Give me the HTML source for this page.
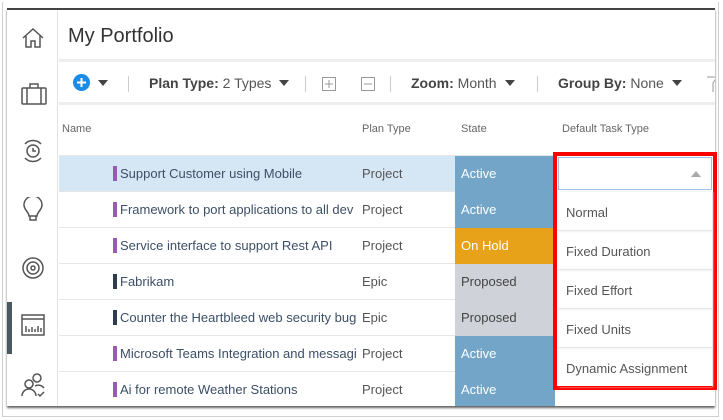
<!DOCTYPE html>
<html><head><meta charset="utf-8"><style>
*{margin:0;padding:0;box-sizing:border-box}
body{width:723px;height:420px;background:#fff;font-family:"Liberation Sans",sans-serif;position:relative;overflow:hidden}
.frame{position:absolute;left:2px;top:2px;width:717px;height:415px;border:1px solid #d0d0d0;border-top:none}
.app{position:absolute;left:7px;top:8px;width:708px;height:398px;background:#fff;border-top:2px solid #444;box-shadow:0 2px 2px #666;overflow:hidden}
.side{position:absolute;left:0;top:0;width:51px;height:100%;border-right:1px solid #e2e2e2}
.side svg{position:absolute;left:14px}
.act{position:absolute;left:0;top:292px;width:5px;height:52px;background:#4a5862}
.title{position:absolute;left:61px;top:15px;font-size:20px;color:#333}
.band{position:absolute;left:52px;right:0;height:3px;background:#eee}
.tb{position:absolute;left:52px;top:54px;right:0;height:38px;font-size:14px;color:#555}
.tb span{position:absolute;top:11px;white-space:nowrap}
.tb b{color:#444}
.tri{display:inline-block;width:0;height:0;border-left:5px solid transparent;border-right:5px solid transparent;border-top:6px solid #444;margin-left:8px;vertical-align:2px}
.vs{position:absolute;top:12px;width:1px;height:16px;background:#ccc}
.hdr{position:absolute;top:113px;font-size:11px;color:#666}
.row{position:absolute;left:52px;right:0;height:36px;border-bottom:1px solid #e6e6e6;font-size:13px;color:#3c4f66}
.row .n{position:absolute;left:54px;top:10px;white-space:nowrap;width:247px;overflow:hidden;padding-left:7px}
.row .n:before{content:"";position:absolute;left:0;top:-1px;width:4px;height:18px;background:var(--c)}
.row .p{position:absolute;left:303px;top:10px;color:#555}
.row .s{position:absolute;left:396px;top:0;width:100px;height:36px;padding:10px 6px;color:#fff}
.red{position:absolute;left:553px;top:152px;width:164px;height:238px;border:4px solid #f00;background:#fff}
.inp{position:absolute;left:1px;top:1px;width:154px;height:33px;border:1px solid #9cc3e6}
.inp:after{content:"";position:absolute;right:10px;top:13px;border-left:5px solid transparent;border-right:5px solid transparent;border-bottom:6px solid #aaa}
.opt{position:absolute;left:1px;width:154px;height:39px;border-bottom:1px solid #eee;font-size:13px;color:#555;padding:13px 8px;box-shadow:1px 0 2px #ddd}
</style></head><body>
<div class="frame"></div>
<div class="app">
 <div class="side">
  <svg style="top:16px" width="24" height="24" viewBox="0 0 24 24" fill="none" stroke="#555" stroke-width="1.5"><path d="M2 12L12 3l10 9M5 10v11h5v-6h4v6h5V10"/></svg>
  <svg style="top:72px" width="26" height="24" viewBox="0 0 26 24" fill="none" stroke="#555" stroke-width="1.5"><rect x="1" y="6" width="24" height="16" rx="1"/><path d="M9 6V2h8v4M6 6v16M20 6v16"/></svg>
  <svg style="top:128px" width="24" height="26" viewBox="0 0 24 26" fill="none" stroke="#555" stroke-width="1.5"><path d="M4 6a11 11 0 0 1 16 0M4 20a11 11 0 0 0 16 0"/><circle cx="12" cy="13" r="6"/><path d="M12 10v3h3"/></svg>
  <svg style="top:187px" width="24" height="28" viewBox="0 0 24 28" fill="none" stroke="#555" stroke-width="1.5"><path d="M8 19c0-4-5-6-5-11a9 9 0 0 1 18 0c0 5-5 7-5 11zM9 19v4h6v-4"/></svg>
  <svg style="top:246px" width="24" height="24" viewBox="0 0 24 24" fill="none" stroke="#555" stroke-width="1.5"><circle cx="12" cy="12" r="10"/><circle cx="12" cy="12" r="6"/><circle cx="12" cy="12" r="2"/></svg>
  <svg style="top:304px" width="24" height="22" viewBox="0 0 24 22" fill="none" stroke="#555" stroke-width="1.5"><rect x="1" y="1" width="22" height="20"/><path d="M1 5h22M5 18v-6M8 18v-3M11 18v-5M14 18v-3M17 18v-6M20 18v-4"/></svg>
  <svg style="top:362px" width="26" height="26" viewBox="0 0 26 26" fill="none" stroke="#555" stroke-width="1.5"><circle cx="16" cy="6" r="4"/><circle cx="8" cy="12" r="4"/><path d="M1 24a7 7 0 0 1 14 0M14 14a7 7 0 0 1 9 2M17 22l2 2 4-4"/></svg>
  <div class="act"></div>
 </div>
 <div class="title">My Portfolio</div>
 <div class="band" style="top:49px"></div>
 <div class="tb">
  <span style="left:14px;top:10px"><svg width="17" height="17" viewBox="0 0 17 17"><circle cx="8.5" cy="8.5" r="8.5" fill="#1a8ce8"/><path d="M8.5 4v9M4 8.5h9" stroke="#fff" stroke-width="2"/></svg></span>
  <span style="left:39px"><i class="tri" style="margin-left:0"></i></span>
  <div class="vs" style="left:69px"></div>
  <span style="left:90px"><b>Plan Type:</b> 2 Types<i class="tri"></i></span>
  <div class="vs" style="left:246px"></div>
  <span style="left:263px;top:13px"><svg width="14" height="14"><rect x=".5" y=".5" width="13" height="13" fill="none" stroke="#999"/><path d="M7 3v8M3 7h8" stroke="#999"/></svg></span>
  <span style="left:302px;top:13px"><svg width="14" height="14"><rect x=".5" y=".5" width="13" height="13" fill="none" stroke="#999"/><path d="M3 7h8" stroke="#999"/></svg></span>
  <div class="vs" style="left:331px"></div>
  <span style="left:352px"><b>Zoom:</b> Month<i class="tri"></i></span>
  <div class="vs" style="left:478px"></div>
  <span style="left:499px"><b>Group By:</b> None<i class="tri"></i></span>
  <span style="left:648px;top:12px"><svg width="10" height="16"><path d="M0 1h10L6 7v9" fill="none" stroke="#999"/></svg></span>
 </div>
 <div class="band" style="top:92px"></div>
 <div class="hdr" style="left:55px">Name</div>
 <div class="hdr" style="left:355px">Plan Type</div>
 <div class="hdr" style="left:454px">State</div>
 <div class="hdr" style="left:555px">Default Task Type</div>
 <div class="band" style="top:145px;height:1px;background:#e6e6e6"></div>
 <div class="row" style="top:146px;background:#d5e6f5"><div class="n" style="--c:#9b59b6">Support Customer using Mobile</div><div class="p">Project</div><div class="s" style="background:#72a5c7">Active</div></div>
 <div class="row" style="top:182px"><div class="n" style="--c:#9b59b6">Framework to port applications to all dev</div><div class="p">Project</div><div class="s" style="background:#72a5c7">Active</div></div>
 <div class="row" style="top:218px"><div class="n" style="--c:#9b59b6">Service interface to support Rest API</div><div class="p">Project</div><div class="s" style="background:#e8a21a">On Hold</div></div>
 <div class="row" style="top:254px"><div class="n" style="--c:#2e3e4e">Fabrikam</div><div class="p">Epic</div><div class="s" style="background:#cfd2d8;color:#444">Proposed</div></div>
 <div class="row" style="top:290px"><div class="n" style="--c:#2e3e4e">Counter the Heartbleed web security bug</div><div class="p">Epic</div><div class="s" style="background:#cfd2d8;color:#444">Proposed</div></div>
 <div class="row" style="top:326px"><div class="n" style="--c:#9b59b6">Microsoft Teams Integration and messagi</div><div class="p">Project</div><div class="s" style="background:#72a5c7">Active</div></div>
 <div class="row" style="top:362px"><div class="n" style="--c:#9b59b6">Ai for remote Weather Stations</div><div class="p">Project</div><div class="s" style="background:#72a5c7">Active</div></div>
</div>
<div class="red">
 <div class="inp"></div>
 <div class="opt" style="top:36px">Normal</div>
 <div class="opt" style="top:75px">Fixed Duration</div>
 <div class="opt" style="top:114px">Fixed Effort</div>
 <div class="opt" style="top:153px">Fixed Units</div>
 <div class="opt" style="top:192px;border-bottom:none">Dynamic Assignment</div>
</div>
</body></html>
